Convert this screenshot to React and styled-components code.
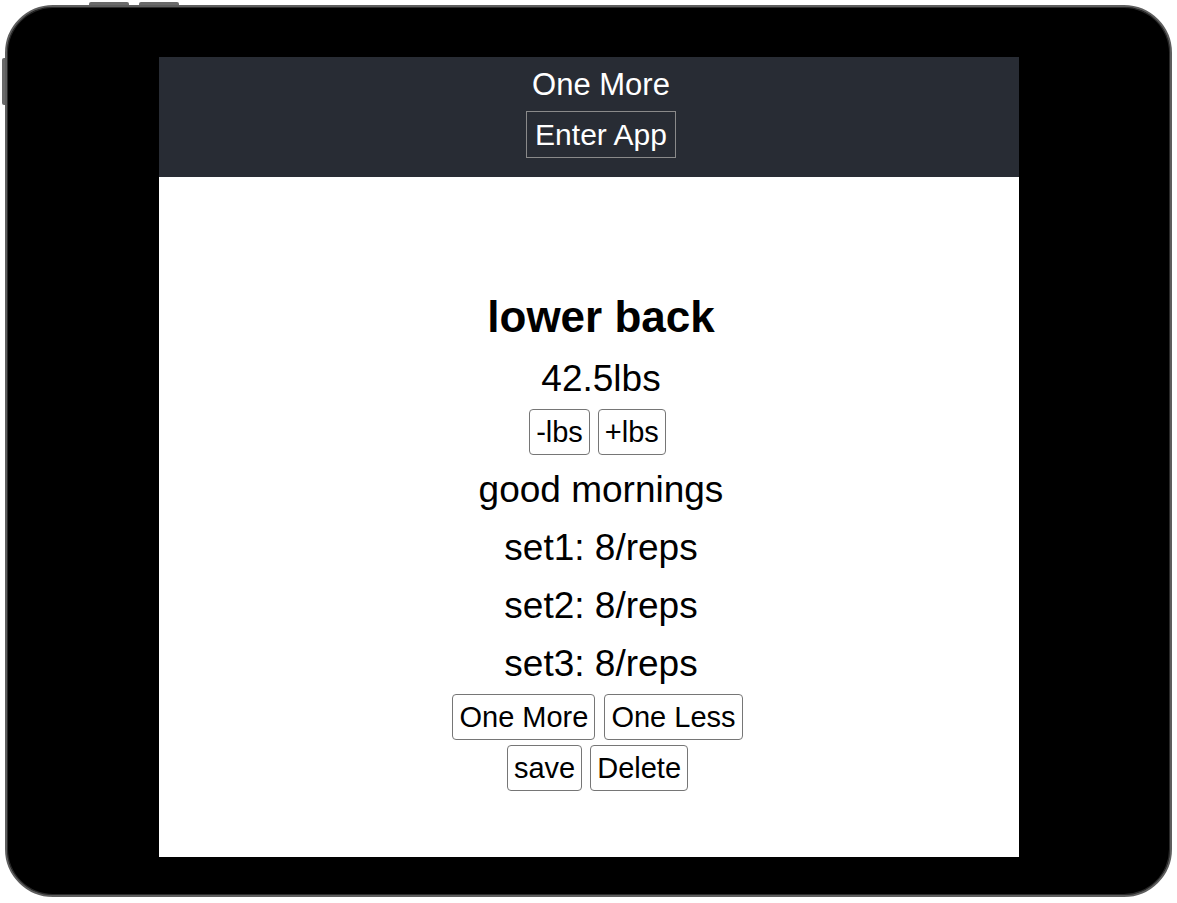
import styled, { createGlobalStyle } from 'styled-components'

const GlobalStyle = createGlobalStyle`
    html, body {
        margin     : 0;
        padding    : 0;
        background : #ffffff;
    }
    body {
        font-family : "Liberation Sans", Arial, sans-serif;
    }
`

const sets = [8, 8, 8]

export default function App() {
    return (
        <>
            <GlobalStyle />
            <Device>
                <SideKey $left={82} $width={40} />
                <SideKey $left={132} $width={40} />
                <VolumeKey />
                <Screen>
                    <Header>
                        <Brand>One More</Brand>
                        <EnterButton>Enter App</EnterButton>
                    </Header>
                    <Main>
                        <Title>lower back</Title>
                        <Line $top={17}>42.5lbs</Line>
                        <ButtonRow $top={10}>
                            <Button>-lbs</Button>
                            <Button>+lbs</Button>
                        </ButtonRow>
                        <Line $top={15}>good mornings</Line>
                        {sets.map((reps, i) => (
                            <Line key={i} $top={18}>set{i + 1}: {reps}/reps</Line>
                        ))}
                        <ButtonRow $top={10} $gap={9}>
                            <Button>One More</Button>
                            <Button>One Less</Button>
                        </ButtonRow>
                        <ButtonRow $top={5}>
                            <Button>save</Button>
                            <Button>Delete</Button>
                        </ButtonRow>
                    </Main>
                </Screen>
            </Device>
        </>
    )
}

const Device = styled.div`
    position      : relative;
    box-sizing    : border-box;
    width         : 1167px;
    height        : 892px;
    margin        : 5px;
    padding       : 50px 151px 38px 152px;
    background    : #000000;
    border        : 2px solid #5e5e5e;
    border-radius : 48px;
    box-shadow    : inset 0 0 0 1px #2a2a2a;
`

const SideKey = styled.span`
    position      : absolute;
    top           : -5px;
    left          : ${(p) => p.$left}px;
    width         : ${(p) => p.$width}px;
    height        : 3px;
    background    : #6a6a6a;
    border-radius : 2px 2px 0 0;
`

const VolumeKey = styled.span`
    position      : absolute;
    left          : -5px;
    top           : 51px;
    width         : 3px;
    height        : 47px;
    background    : #6a6a6a;
    border-radius : 2px 0 0 2px;
`

const Screen = styled.div`
    display        : flex;
    flex-direction : column;
    width          : 860px;
    height         : 800px;
    background     : #ffffff;
    overflow       : hidden;
`

const Header = styled.header`
    display        : flex;
    flex-direction : column;
    align-items    : center;
    box-sizing     : border-box;
    height         : 120px;
    padding        : 11px 0 19px 24px;
    background     : #282c34;
    color          : #ffffff;
`

const Brand = styled.div`
    font-size   : 31px;
    line-height : 34px;
`

const EnterButton = styled.button`
    box-sizing  : border-box;
    height      : 47px;
    margin-top  : 9px;
    padding     : 0 8px;
    font-family : inherit;
    font-size   : 30px;
    color       : #ffffff;
    background  : transparent;
    border      : 1px solid #8a8a8a;
`

const Main = styled.main`
    display        : flex;
    flex-direction : column;
    align-items    : center;
    padding        : 115px 0 0 24px;
    color          : #000000;
`

const Title = styled.h2`
    margin      : 0;
    font-size   : 44px;
    font-weight : 700;
    line-height : 50px;
`

const Line = styled.div`
    margin-top  : ${(p) => p.$top}px;
    font-size   : 37px;
    line-height : 40px;
`

const ButtonRow = styled.div`
    display      : flex;
    gap          : ${(p) => p.$gap || 8}px;
    margin-top   : ${(p) => p.$top}px;
    margin-right : 7px;
`

const Button = styled.button`
    box-sizing    : border-box;
    height        : 46px;
    padding       : 0 6px;
    font-family   : inherit;
    font-size     : 29px;
    color         : #000000;
    background    : #ffffff;
    border        : 1px solid #767676;
    border-radius : 4px;
`
